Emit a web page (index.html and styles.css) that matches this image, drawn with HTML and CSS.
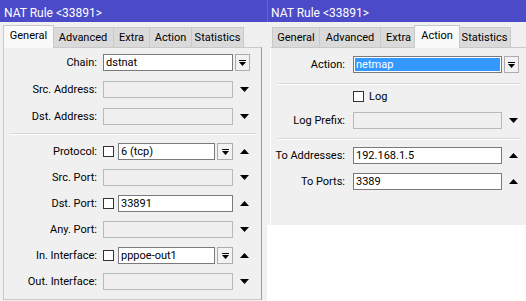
FILE: index.html
```html
<!DOCTYPE html>
<html lang="en">
<head>
  <meta charset="UTF-8">
  <title>NAT Rule</title>
  <link rel="stylesheet" href="styles.css">
</head>
<body>
  <div class="desktop">

    <section class="win win-left">
      <div class="titlebar">NAT Rule &lt;33891&gt;</div>
      <div class="tabs">
        <div class="tab t-general sel">General</div>
        <div class="tab t-advanced">Advanced</div>
        <div class="tab t-extra">Extra</div>
        <div class="tab t-action">Action</div>
        <div class="tab t-stats last">Statistics</div>
      </div>
      <div class="page page-left">
        <div class="group g1">
          <div class="row">
            <label>Chain:</label>
            <div class="field"><div class="box">dstnat</div></div>
            <div class="tail"><span class="btn">
              <svg width="7" height="6"><path d="M0 0h7v1H0z M0 2h7L3.5 6z"/></svg>
            </span></div>
          </div>
          <div class="row">
            <label>Src. Address:</label>
            <div class="field"><div class="box off"></div></div>
            <div class="tail"><svg class="tri" width="9" height="5"><path d="M0 0h9L4.5 5z"/></svg></div>
          </div>
          <div class="row">
            <label>Dst. Address:</label>
            <div class="field"><div class="box off"></div></div>
            <div class="tail"><svg class="tri" width="9" height="5"><path d="M0 0h9L4.5 5z"/></svg></div>
          </div>
        </div>
        <div class="sep"></div>
        <div class="group g2">
          <div class="row">
            <label>Protocol:</label>
            <div class="field">
              <span class="check"></span>
              <div class="box">6 (tcp)</div>
              <span class="btn">
                <svg width="7" height="6"><path d="M0 0h7v1H0z M0 2h7L3.5 6z"/></svg>
              </span>
            </div>
            <div class="tail"><svg class="tri" width="9" height="5"><path d="M0 5h9L4.5 0z"/></svg></div>
          </div>
          <div class="row">
            <label>Src. Port:</label>
            <div class="field"><div class="box off"></div></div>
            <div class="tail"><svg class="tri" width="9" height="5"><path d="M0 0h9L4.5 5z"/></svg></div>
          </div>
          <div class="row">
            <label>Dst. Port:</label>
            <div class="field">
              <span class="check"></span>
              <div class="box">33891</div>
            </div>
            <div class="tail"><svg class="tri" width="9" height="5"><path d="M0 5h9L4.5 0z"/></svg></div>
          </div>
          <div class="row">
            <label>Any. Port:</label>
            <div class="field"><div class="box off"></div></div>
            <div class="tail"><svg class="tri" width="9" height="5"><path d="M0 0h9L4.5 5z"/></svg></div>
          </div>
          <div class="row">
            <label>In. Interface:</label>
            <div class="field">
              <span class="check"></span>
              <div class="box">pppoe-out1</div>
              <span class="btn">
                <svg width="7" height="6"><path d="M0 0h7v1H0z M0 2h7L3.5 6z"/></svg>
              </span>
            </div>
            <div class="tail"><svg class="tri" width="9" height="5"><path d="M0 5h9L4.5 0z"/></svg></div>
          </div>
          <div class="row">
            <label>Out. Interface:</label>
            <div class="field"><div class="box off"></div></div>
            <div class="tail"><svg class="tri" width="9" height="5"><path d="M0 0h9L4.5 5z"/></svg></div>
          </div>
        </div>
      </div>
    </section>

    <section class="win win-right">
      <div class="titlebar">NAT Rule &lt;33891&gt;</div>
      <div class="tabs">
        <div class="tab t-general">General</div>
        <div class="tab t-advanced">Advanced</div>
        <div class="tab t-extra">Extra</div>
        <div class="tab t-action sel">Action</div>
        <div class="tab t-stats last">Statistics</div>
      </div>
      <div class="page page-right">
        <div class="row">
          <label>Action:</label>
          <div class="field"><div class="box focus"><span class="hl">netmap</span></div></div>
          <div class="tail"><span class="btn">
            <svg width="7" height="6"><path d="M0 0h7v1H0z M0 2h7L3.5 6z"/></svg>
          </span></div>
        </div>
        <div class="sep"></div>
        <div class="row row-log">
          <label></label>
          <div class="field"><span class="check"></span><span class="check-text">Log</span></div>
        </div>
        <div class="row row-prefix">
          <label>Log Prefix:</label>
          <div class="field"><div class="box off"></div></div>
          <div class="tail"><svg class="tri" width="9" height="5"><path d="M0 0h9L4.5 5z"/></svg></div>
        </div>
        <div class="sep sep2"></div>
        <div class="row row-addr">
          <label>To Addresses:</label>
          <div class="field"><div class="box">192.168.1.5</div></div>
          <div class="tail"><svg class="tri" width="9" height="5"><path d="M0 5h9L4.5 0z"/></svg></div>
        </div>
        <div class="row row-ports">
          <label>To Ports:</label>
          <div class="field"><div class="box">3389</div></div>
          <div class="tail"><svg class="tri" width="9" height="5"><path d="M0 5h9L4.5 0z"/></svg></div>
        </div>
      </div>
    </section>

  </div>
</body>
</html>
```

FILE: styles.css
```css
html,body {
  margin: 0;
  padding: 0;
  overflow: hidden;
}
body {
  background: #fff;
  font-family: Roboto, "Liberation Sans", sans-serif;
  font-size: 11px;
  color: #000;
}
.desktop {
  display: flex;
  align-items: flex-start;
  width: 526px;
  height: 301px;
  overflow: hidden;
}

/* windows */
.win {
  flex: none;
  background: #f0f0f0;
  overflow: hidden;
}
.win-left {
  width: 267px;
  height: 301px;
}
.win-right {
  width: 270px;
  height: 225px;
}
.titlebar {
  height: 22px;
  box-sizing: border-box;
  padding: 4px 0 0 4px;
  background: #4b4bc9;
  color: #fff;
  font-size: 12px;
  line-height: 18px;
}
.win-right .titlebar {
  border-left: 1px solid #6262d2;
  padding-left: 3px;
}

/* tabs */
.tabs {
  display: flex;
  align-items: flex-end;
  height: 20px;
  margin-top: 5px;
  padding-left: 5px;
}
.tab {
  height: 20px;
  box-sizing: border-box;
  border-left: 1px solid #c9c9c9;
  border-top: 1px solid #c9c9c9;
  background: #dadada;
  text-align: center;
  line-height: 19px;
}
.tab.last {
  border-right: 1px solid #c9c9c9;
}
.t-general { width: 47px; }
.t-advanced { width: 61px; }
.t-extra { width: 36px; }
.t-action { width: 42px; }
.t-stats { width: 53px; }
.tab.sel {
  position: relative;
  z-index: 1;
  height: 23px;
  margin: 0 -2px -1px;
  border-right: 1px solid #c9c9c9;
  background: #f9f9f9;
  line-height: 20px;
}
.t-general.sel { width: 51px; }
.t-action.sel { width: 46px; }

/* tab page */
.page {
  box-sizing: border-box;
  border: 1px solid #c9c9c9;
  border-right-color: #9a9a9a;
}
.page-left {
  width: 259px;
  height: 253px;
  margin-left: 3px;
  padding-top: 6px;
}
.page-right {
  width: 300px;
  height: 200px;
  margin-left: 3px;
  padding-top: 8px;
  border-left-color: #fff;
}
.group {
  display: flex;
  flex-direction: column;
}
.g1 { gap: 10px; }
.g2 { gap: 9px; }
.sep {
  height: 0;
  border-top: 1px solid #d7d7d7;
  border-bottom: 1px solid #fff;
  margin: 8px 5px 8px 6px;
}

/* form rows */
.row {
  display: flex;
  align-items: center;
  height: 17px;
}
.row label {
  flex: none;
  width: 93px;
  margin-right: 6px;
  text-align: right;
  white-space: nowrap;
}
.field {
  flex: none;
  display: flex;
  align-items: center;
  width: 130px;
  height: 17px;
}
.box {
  flex: 1;
  height: 17px;
  box-sizing: border-box;
  padding-left: 2px;
  border: 1px solid #7a7a7a;
  background: #fff;
  line-height: 15px;
  white-space: nowrap;
  overflow: hidden;
}
.box.off {
  border-color: #b9b9b9;
  background: #f0f0f0;
}
.box.focus {
  padding: 1px;
  border-color: #7a7a7a;
}
.hl {
  display: block;
  height: 13px;
  padding-left: 1px;
  background: #3399ff;
  color: #fff;
  line-height: 13px;
}
.check {
  flex: none;
  width: 11px;
  height: 11px;
  box-sizing: border-box;
  border: 1px solid #333;
  background: #fff;
  margin-right: 4px;
}
.btn {
  flex: none;
  display: flex;
  align-items: center;
  justify-content: center;
  width: 16px;
  height: 17px;
  box-sizing: border-box;
  border: 1px solid #adadad;
  background: #f2f2f2;
  margin-left: 2px;
}
.tail {
  flex: none;
  display: flex;
  align-items: center;
  width: 28px;
}
.tail .btn {
  width: 15px;
}
.tri {
  display: block;
  margin-left: 7px;
}

/* right window form */
.page-right .row label {
  width: 74px;
  margin-right: 8px;
}
.page-right .field {
  width: 149px;
}
.page-right .sep {
  margin: 10px 0 0 7px;
  width: 243px;
}
.page-right .sep2 {
  margin-top: 9px;
}
.row-log { margin-top: 3px; }
.row-prefix { margin-top: 7px; }
.row-addr { margin-top: 7px; }
.row-ports { margin-top: 9px; }
.check-text {
  margin-left: 1px;
}
```
